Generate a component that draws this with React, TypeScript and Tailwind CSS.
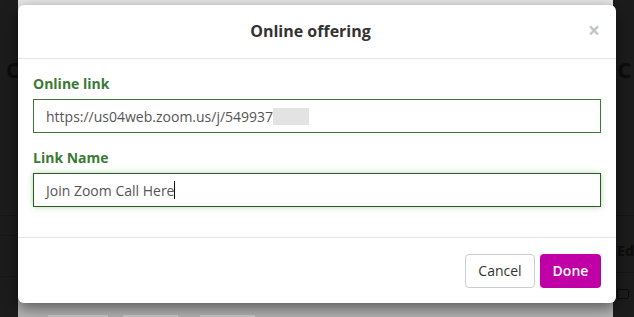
export default function App() {
  return (
    <div className="relative w-[634px] h-[317px] bg-[#1c1c1c] overflow-hidden font-['Open_Sans',sans-serif]">
      {/* page behind the overlay */}
      <div className="flex h-full">
        <div className="w-[18px] flex flex-col pt-[58px]">
          <span className="text-[22px] font-bold leading-none text-[#0c0c0c] pl-[6px]">O</span>
          <div className="mt-[135px] h-px bg-[#161616]" />
          <div className="mt-[19px] h-px bg-[#161616]" />
          <div className="mt-[40px] h-px bg-[#161616]" />
        </div>
        <div className="w-[598px] h-full bg-gradient-to-b from-[#e8e8e8] via-[#a8a8a8] to-[#b4b4b4] flex items-end gap-[15px] pl-[30px]">
          <div className="w-[60px] h-[2px] bg-[#c8c8c8]" />
          <div className="w-[55px] h-[2px] bg-[#c8c8c8]" />
          <div className="w-[55px] h-[2px] bg-[#c8c8c8] ml-[7px]" />
        </div>
        <div className="flex-1 flex flex-col pt-[58px] pl-[4px]">
          <span className="text-[22px] font-bold leading-none text-[#0c0c0c]">C</span>
          <div className="mt-[135px] h-px bg-[#161616]" />
          <span className="mt-[28px] text-[14px] font-bold text-[#0c0c0c] leading-none">Ed</span>
          <div className="mt-[14px] h-px bg-[#161616]" />
          <div className="mt-[16px] w-[12px] h-[10px] border border-[#0c0c0c] rounded-[2px]" />
        </div>
      </div>

      {/* modal */}
      <div className="absolute left-[18px] top-[5px] w-[598px] h-[298px] bg-white rounded-[6px] shadow-[0_5px_15px_rgba(0,0,0,0.5)] flex flex-col">
        <div className="h-[54px] border-b border-[#e5e5e5] flex items-center px-[15px]">
          <h4 className="flex-1 text-center text-[16px] font-bold text-[#333] leading-[23px]">Online offering</h4>
          <span className="w-[13px] text-[21px] font-bold leading-none text-[#c4c4c4] -mt-[2px]">×</span>
        </div>

        <div className="p-[15px] flex flex-col">
          <div className="mb-[15px]">
            <label className="block text-[14px] font-bold text-[#3b7a35] leading-[20px] mb-[5px]">Online link</label>
            <div className="h-[34px] border border-[#3d7a37] flex items-center pl-[12px] text-[14px] text-[#555]">
              <span>https://us04web.zoom.us/j/549937</span>
              <span className="w-[36px] h-[17px] bg-[#e3e3e3]" />
            </div>
          </div>
          <div className="mb-[15px]">
            <label className="block text-[14px] font-bold text-[#3b7a35] leading-[20px] mb-[5px]">Link Name</label>
            <div className="h-[34px] border border-[#2b5a26] shadow-[0_0_6px_rgba(90,170,80,0.45)] flex items-center pl-[12px] text-[14px] text-[#555]">
              <span>Join Zoom Call Here</span>
              <span className="w-px h-[18px] bg-[#111]" />
            </div>
          </div>
        </div>

        <div className="border-t border-[#e5e5e5] flex-1 flex items-center justify-end gap-[5px] px-[15px]">
          <button className="w-[70px] h-[34px] rounded-[4px] border border-[#ccc] bg-white text-[14px] text-[#333]">Cancel</button>
          <button className="w-[61px] h-[34px] rounded-[4px] bg-[#c000a6] text-[14px] font-semibold text-white">Done</button>
        </div>
      </div>
    </div>
  );
}
